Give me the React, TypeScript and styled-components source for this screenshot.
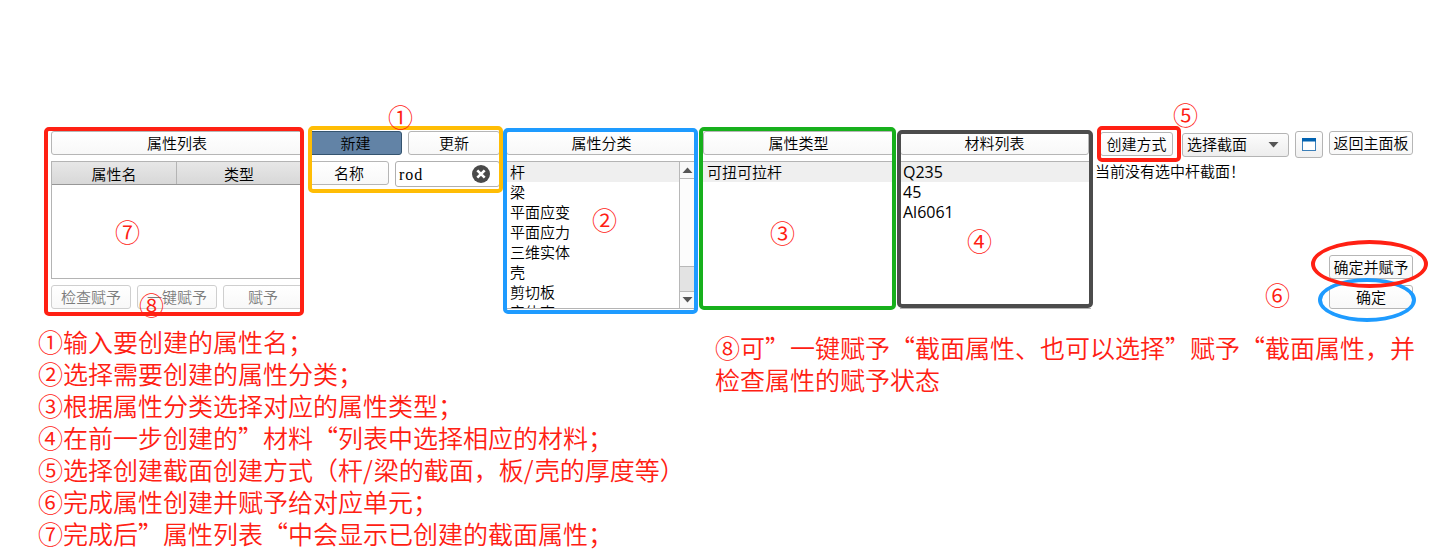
import React from "react";
import styled, { createGlobalStyle } from "styled-components";

const GlobalStyle = createGlobalStyle`
  * { box-sizing: border-box; }
  body {
    margin: 0;
    background: #fff;
    overflow: hidden;
  }
`;

const RED = "#ff2013";
const BLUE = "#1e9bff";

const Page = styled.main`
  position: relative;
  width: 1445px;
  height: 557px;
  overflow: hidden;
  background: #fff;
  color: #000;
  font-family: "Noto Sans CJK SC", sans-serif;
  font-size: 15px;
  font-weight: 350;
`;

const Panel = styled.section`
  display: flex;
  gap: 6px;
  height: 325px;
  padding: 131px 32px 0 51px;
`;

const Column = styled.div<{ $width: number }>`
  display: flex;
  flex-direction: column;
  flex: none;
  gap: 6px;
  width: ${(p) => p.$width}px;
`;

const Row = styled.div`
  display: flex;
  gap: 6px;
`;

const Button = styled.button<{ $width?: number; $active?: boolean }>`
  flex: none;
  width: ${(p) => (p.$width ? `${p.$width}px` : "100%")};
  height: 24px;
  padding: 0;
  border: 1px solid ${(p) => (p.$active ? "#35546f" : "#b6b6b6")};
  border-radius: 3px;
  background: ${(p) => (p.$active ? "#6283a6" : "linear-gradient(#fff, #f8f8f8)")};
  color: #000;
  font: inherit;
  line-height: 22px;
  white-space: nowrap;
  &:disabled {
    border-color: #cfcfcf;
    color: #7c7c7c;
  }
`;

const Table = styled.div`
  height: 118px;
  border: 1px solid #b4b4b4;
  border-right: 0;
`;

const TableHead = styled.div`
  display: grid;
  grid-template-columns: 124px 1fr;
  height: 23px;
  border-bottom: 1px solid #979797;
  background: linear-gradient(#e7e7e7, #d8d8d8);
  line-height: 24px;
  text-align: center;
`;

const HeadCell = styled.span`
  height: 22px;
  & + & {
    padding-right: 2px;
    border-left: 1px solid #b4b4b4;
  }
`;

const Field = styled.div`
  display: flex;
  align-items: center;
  justify-content: space-between;
  width: 105px;
  height: 26px;
  padding: 0 9px 0 3px;
  border: 1px solid #b0b0b0;
  border-radius: 3px;
  font: 400 16px "Liberation Serif", serif;
  letter-spacing: 1px;
`;

const FieldValue = styled.span`
  padding-top: 2px;
`;

const List = styled.div<{ $height: number }>`
  display: flex;
  height: ${(p) => p.$height}px;
  overflow: hidden;
  border: solid #b4b4b4;
  border-width: 1px 0;
`;

const Items = styled.ul<{ $latin?: boolean }>`
  flex: 1;
  margin: 0;
  padding: 0;
  list-style: none;
  ${(p) => p.$latin && `font: 400 16px "Open Sans", sans-serif;`}
`;

const Item = styled.li<{ $selected?: boolean; $inset?: number }>`
  height: 20px;
  padding-left: ${(p) => p.$inset ?? 4}px;
  background: ${(p) => (p.$selected ? "#efefef" : "transparent")};
  line-height: 20px;
  white-space: nowrap;
`;

const Scrollbar = styled.div`
  display: flex;
  flex-direction: column;
  width: 18px;
  border-left: 1px solid #b8b8b8;
  background: #fcfcfc;
`;

const Arrow = styled.span`
  display: flex;
  justify-content: center;
  align-items: center;
  height: 16px;
  padding-right: 2px;
  background: #f8f8f8;
`;

const Track = styled.span`
  display: flex;
  flex: 1;
  align-items: flex-end;
  border: solid #b8b8b8;
  border-width: 1px 0;
`;

const Thumb = styled.span`
  flex: 1;
  height: 25px;
  border-top: 1px solid #b8b8b8;
  background: #e3e3e3;
`;

const Actions = styled.div`
  display: flex;
  flex-direction: column;
  width: 316px;
`;

const Toolbar = styled.div`
  display: flex;
  align-items: flex-start;
  height: 29px;
  padding-left: 3px;
`;

const MethodSlot = styled.div`
  width: 82px;
  padding-top: 1px;
`;

const Select = styled.div`
  display: flex;
  align-items: center;
  justify-content: space-between;
  width: 107px;
  height: 24px;
  margin: 2px 6px 0 0;
  padding: 0 9px 0 4px;
  border: 1px solid #b4b4b4;
  border-radius: 3px;
  background: linear-gradient(#fcfcfc, #ededed);
  line-height: 20px;
`;

const SelectValue = styled.span`
  height: 22px;
`;

const IconButton = styled.button`
  display: flex;
  align-items: center;
  justify-content: center;
  width: 28px;
  height: 27px;
  margin-right: 6px;
  padding: 0;
  border: 1px solid #b4b4b4;
  border-radius: 3px;
  background: linear-gradient(#fff, #f0f0f0);
`;

const Status = styled.p`
  flex: 1;
  margin: 0 0 0 -2px;
  line-height: 21px;
`;

const Confirm = styled.div`
  display: flex;
  flex-direction: column;
  align-self: flex-end;
  gap: 6px;
  margin-bottom: 16px;
`;

const Notes = styled.section`
  display: flex;
  padding-left: 38px;
  color: ${RED};
  font-size: 25px;
  line-height: 32px;
  white-space: nowrap;
`;

const Steps = styled.div`
  width: 677px;
`;

const Remark = styled.div`
  padding-top: 6px;
`;

const Line = styled.p`
  height: 32px;
  margin: 0;
`;

const Slash = styled.span`
  letter-spacing: 1px;
`;

type Box = {
  $x: number;
  $y: number;
  $w: number;
  $h: number;
  $color: string;
  $round?: boolean;
};

const Frame = styled.div<Box>`
  position: absolute;
  left: ${(p) => p.$x}px;
  top: ${(p) => p.$y}px;
  width: ${(p) => p.$w}px;
  height: ${(p) => p.$h}px;
  border: 4px solid ${(p) => p.$color};
  border-radius: ${(p) => (p.$round ? "50%" : "5px")};
  pointer-events: none;
`;

const Mark = styled.span<{ $x: number; $y: number }>`
  position: absolute;
  left: ${(p) => p.$x - 12.5}px;
  top: ${(p) => p.$y - 17}px;
  color: ${RED};
  font-size: 25px;
  line-height: 32px;
`;

const Triangle = ({ up }: { up?: boolean }) => (
  <svg width="11" height="6" viewBox="0 0 11 6">
    <path d={up ? "M0.5 6L5.5 0.5L10.5 6Z" : "M0.5 0L5.5 5.5L10.5 0Z"} fill="#555" />
  </svg>
);

const categories = ["杆", "梁", "平面应变", "平面应力", "三维实体", "壳", "剪切板", "实体壳"];

const frames: Box[] = [
  { $x: 44, $y: 127, $w: 260, $h: 189, $color: RED },
  { $x: 307.5, $y: 125.5, $w: 195.5, $h: 67, $color: "#ffbd05" },
  { $x: 503, $y: 128, $w: 195, $h: 186, $color: BLUE },
  { $x: 699, $y: 127, $w: 197, $h: 183, $color: "#17b01c" },
  { $x: 897, $y: 130, $w: 195.5, $h: 178, $color: "#4c4c4c" },
  { $x: 1096.5, $y: 125.5, $w: 84, $h: 36.5, $color: RED },
  { $x: 1318, $y: 278, $w: 98, $h: 44, $color: BLUE, $round: true },
  { $x: 1310.5, $y: 240, $w: 117, $h: 48, $color: RED, $round: true },
];

const marks: [string, number, number][] = [
  ["①", 400.5, 117],
  ["②", 604.5, 220],
  ["③", 782.5, 233],
  ["④", 979.5, 241],
  ["⑤", 1185.5, 115],
  ["⑥", 1277.5, 295],
  ["⑦", 127.5, 232],
  ["⑧", 151.5, 305],
];

export default function App() {
  return (
    <Page>
      <GlobalStyle />
      <Panel>
        <Column $width={252}>
          <Button>属性列表</Button>
          <Table>
            <TableHead>
              <HeadCell>属性名</HeadCell>
              <HeadCell>类型</HeadCell>
            </TableHead>
          </Table>
          <Row>
            <Button $width={80} disabled>检查赋予</Button>
            <Button $width={80} disabled>一键赋予</Button>
            <Button $width={80} disabled>赋予</Button>
          </Row>
        </Column>

        <Column $width={191}>
          <Row>
            <Button $width={93} $active>新建</Button>
            <Button $width={92}>更新</Button>
          </Row>
          <Row>
            <Button $width={80}>名称</Button>
            <Field>
              <FieldValue>rod</FieldValue>
              <svg width="18" height="18" viewBox="0 0 18 18">
                <circle cx="9" cy="9" r="9" fill="#4a4a4a" />
                <path d="M5.3 5.3L12.7 12.7M12.7 5.3L5.3 12.7" stroke="#fff" strokeWidth="2.6" />
              </svg>
            </Field>
          </Row>
        </Column>

        <Column $width={191}>
          <Button>属性分类</Button>
          <List $height={148}>
            <Items>
              {categories.map((name, i) => (
                <Item key={name} $selected={i === 0}>{name}</Item>
              ))}
            </Items>
            <Scrollbar>
              <Arrow><Triangle up /></Arrow>
              <Track><Thumb /></Track>
              <Arrow><Triangle /></Arrow>
            </Scrollbar>
          </List>
        </Column>

        <Column $width={191}>
          <Button>属性类型</Button>
          <List $height={146}>
            <Items>
              <Item $selected>可扭可拉杆</Item>
            </Items>
          </List>
        </Column>

        <Column $width={191}>
          <Button $width={189}>材料列表</Button>
          <List $height={148}>
            <Items $latin>
              <Item $inset={3} $selected>Q235</Item>
              <Item $inset={3}>45</Item>
              <Item $inset={3}>Al6061</Item>
            </Items>
          </List>
        </Column>

        <Actions>
          <Toolbar>
            <MethodSlot>
              <Button $width={73}>创建方式</Button>
            </MethodSlot>
            <Select>
              <SelectValue>选择截面</SelectValue>
              <Triangle />
            </Select>
            <IconButton aria-label="窗口">
              <svg width="14" height="13" viewBox="0 0 14 13">
                <rect x="0.5" y="0.5" width="13" height="12" fill="#fff" stroke="#3c7fb8" />
                <rect width="14" height="3.5" fill="#0062b1" />
              </svg>
            </IconButton>
            <Button $width={84}>返回主面板</Button>
          </Toolbar>
          <Status>当前没有选中杆截面！</Status>
          <Confirm>
            <Button $width={84}>确定并赋予</Button>
            <Button $width={84}>确定</Button>
          </Confirm>
        </Actions>
      </Panel>

      <Notes>
        <Steps>
          <Line>①输入要创建的属性名；</Line>
          <Line>②选择需要创建的属性分类；</Line>
          <Line>③根据属性分类选择对应的属性类型；</Line>
          <Line>④在前一步创建的”材料“列表中选择相应的材料；</Line>
          <Line>
            ⑤选择创建截面创建方式（杆<Slash>/</Slash>梁的截面，板<Slash>/</Slash>壳的厚度等）
          </Line>
          <Line>⑥完成属性创建并赋予给对应单元；</Line>
          <Line>⑦完成后”属性列表“中会显示已创建的截面属性；</Line>
        </Steps>
        <Remark>
          <Line>⑧可”一键赋予“截面属性、也可以选择”赋予“截面属性，并</Line>
          <Line>检查属性的赋予状态</Line>
        </Remark>
      </Notes>

      {frames.map((frame, i) => (
        <Frame key={i} {...frame} />
      ))}
      {marks.map(([label, x, y]) => (
        <Mark key={label} $x={x} $y={y}>{label}</Mark>
      ))}
    </Page>
  );
}
